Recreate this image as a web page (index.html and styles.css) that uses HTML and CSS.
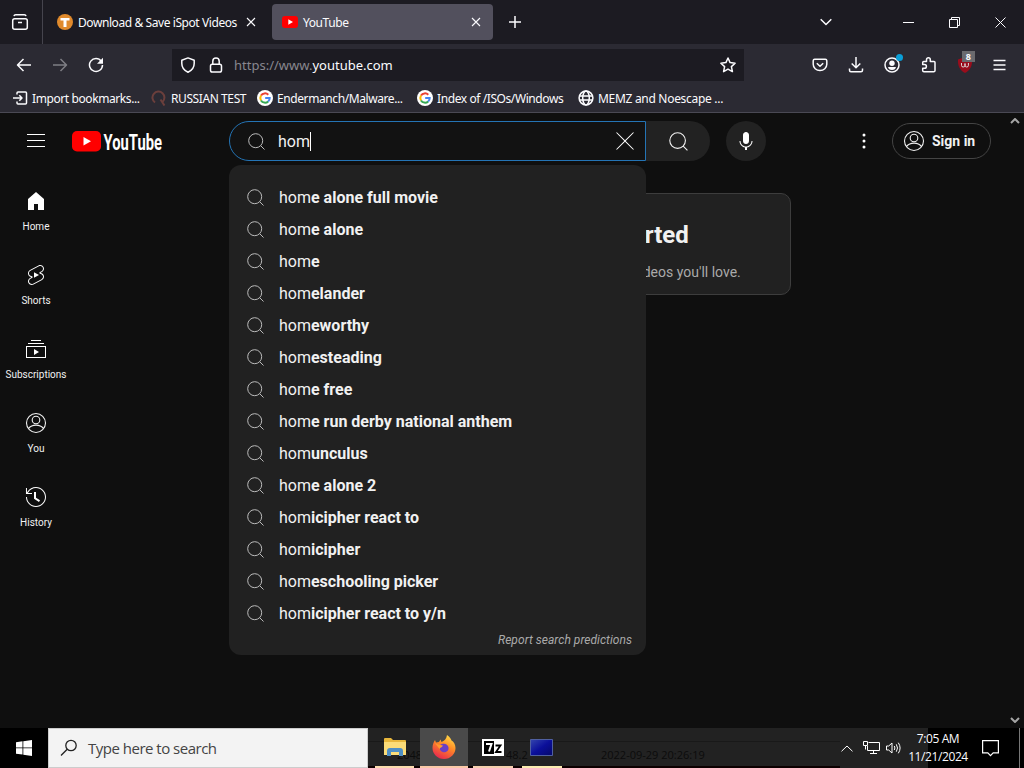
FILE: index.html
```
<!DOCTYPE html>
<html lang="en">
<head>
    <title>YouTube</title>
    <meta charset="utf-8">
    <meta name="viewport" content="width=device-width, initial-scale=1.0">
    <link rel="stylesheet" href="styles.css">
</head>
<body>
<!-- shared icons -->
<svg class="defs" width="0" height="0">
    <defs>
        <symbol id="search" viewBox="0 0 17 17"><g fill="none" stroke="currentColor"><circle cx="7.700" cy="7.700" r="7"/><path d="M12.700 12.700l3.800 3.800"/></g></symbol>
        <symbol id="person" viewBox="0 0 24 24"><g fill="none" stroke="currentColor" stroke-width="1.100"><circle cx="12" cy="12" r="9.500"/><circle cx="12" cy="9" r="3.800"/><path d="M4.400 17.600c2-2.500 4.600-3.500 7.600-3.500s5.600 1 7.600 3.500"/></g></symbol>
        <symbol id="google" viewBox="0 0 16 16">
            <circle cx="8" cy="8" r="8" fill="#fff"/>
            <g fill="none" stroke-width="2">
                <path d="M11.300 4.700A4.700 4.700 0 0 0 4 5.600" stroke="#ea4335"/>
                <path d="M4 5.600a4.700 4.700 0 0 0 0 4.800" stroke="#fbbc05"/>
                <path d="M4 10.400a4.700 4.700 0 0 0 7.200 1" stroke="#34a853"/>
                <path d="M11.200 11.400A4.600 4.600 0 0 0 12.700 8H8.200" stroke="#4285f4"/>
            </g>
        </symbol>
        <symbol id="cross" viewBox="0 0 10 10"><path d="M1 1l8 8M9 1l-8 8" fill="none" stroke="currentColor" stroke-width="1.100"/></symbol>
    </defs>
</svg>

<div class="tabs">
    <div class="view">
        <svg class="line" width="18" height="18" viewBox="0 0 18 18"><rect x="1.700" y="5.700" width="14.600" height="10.600" rx="2"/><path d="M3 3.200Q3.200 1.700 4.700 1.700h8.600Q14.800 1.700 15 3.200M7 9.500h4"/></svg>
    </div>
    <div class="tab">
        <svg width="16" height="16" viewBox="0 0 16 16"><circle cx="8" cy="8" r="8" fill="#e08a2c"/><path d="M3.500 4h9v2.500H9.500V13h-3V6.500h-3z" fill="#fff"/></svg>
        <span class="title">Download &amp; Save iSpot Videos</span>
        <svg class="close" width="10" height="10"><use href="#cross"/></svg>
    </div>
    <div class="tab active">
        <svg width="16" height="12" viewBox="0 0 16 12"><rect width="16" height="12" rx="3" fill="#f00"/><path d="M6.300 3.300v5.400L11 6z" fill="#fff"/></svg>
        <span class="title">YouTube</span>
        <svg class="close" width="10" height="10"><use href="#cross"/></svg>
    </div>
    <svg class="line plus" width="12" height="12" viewBox="0 0 12 12"><path d="M6 0v12M0 6h12"/></svg>
    <div class="window">
        <svg class="line" width="12" height="8" viewBox="0 0 12 8"><path d="M.7 1.200L6 6.500l5.300-5.300"/></svg>
        <svg class="line thin min" width="11" height="11" viewBox="0 0 11 11"><path d="M0 5.500h11"/></svg>
        <svg class="line thin" width="11" height="11" viewBox="0 0 11 11"><path d="M.5 2.500h8v8h-8zM2.500 2.500v-2h8v8h-2"/></svg>
        <svg class="line thin" width="11" height="11" viewBox="0 0 11 11"><path d="M.5.500l10 10M10.500.500l-10 10"/></svg>
    </div>
</div>

<div class="nav">
    <div class="history">
        <svg class="line" width="16" height="16" viewBox="0 0 16 16"><path d="M15 8H1.500M7.500 2L1.500 8l6 6"/></svg>
        <svg class="line off" width="16" height="16" viewBox="0 0 16 16"><path d="M1 8h13.500M8.500 2l6 6-6 6"/></svg>
        <svg class="line" width="16" height="16" viewBox="0 0 16 16"><path d="M13.300 4.200A6.500 6.500 0 1 0 14.500 8"/><path d="M15 .8v6H9z" class="solid"/></svg>
    </div>
    <div class="url">
        <svg class="line" width="16" height="16" viewBox="0 0 16 16"><path d="M8 .9l6.200 2.300v3.300c0 4-2.400 7-6.200 8.700C4.200 13.500 1.800 10.500 1.800 6.500V3.200z"/></svg>
        <svg class="line lock" width="14" height="16" viewBox="0 0 14 16"><rect x="1.500" y="7.200" width="11" height="7.800" rx="1.800"/><path d="M3.800 7V4.200a3.200 3.200 0 0 1 6.400 0V7"/></svg>
        <span class="address"><span>https://www.</span>youtube.com</span>
        <svg class="line star" width="16" height="16" viewBox="0 0 16 16"><path d="M8 1l2.100 4.600 5 .6-3.700 3.400 1 5L8 12.100l-4.400 2.500 1-5L.9 6.200l5-.6z"/></svg>
    </div>
    <div class="tools">
        <svg class="line" width="16" height="16" viewBox="0 0 16 16"><path d="M2.700 2.200h10.600q1.500 0 1.500 1.500v3.600a6.800 6.300 0 0 1-13.600 0V3.700q0-1.500 1.500-1.500zM4.800 6.200L8 9.300l3.200-3.100"/></svg>
        <svg class="line" width="16" height="16" viewBox="0 0 16 16"><path d="M8 0v10.500M3.700 6.500L8 10.700l4.300-4.200M1.500 11.500v1.800q0 1.500 1.500 1.500h10q1.500 0 1.500-1.500v-1.800"/></svg>
        <div class="account">
            <svg class="line" width="16" height="16" viewBox="0 0 16 16"><circle cx="8" cy="8" r="7"/><circle cx="8" cy="6.200" r="2.700" class="solid"/><path d="M4 10h8q-.5 3-4 3T4 10z" class="solid"/></svg>
            <i class="dot"></i>
        </div>
        <svg class="line" width="16" height="16" viewBox="0 0 16 16"><path d="M5.500 4.500V2.700a1.900 1.900 0 0 1 3.800 0v1.800h3.700q1 0 1 1v8q0 1.300-1.300 1.300H3q-1.300 0-1.300-1.300v-2.300h1.900a1.800 1.800 0 0 0 0-3.600H1.700V5.500q0-1 1-1z"/></svg>
        <div class="ublock">
            <svg width="16" height="16" viewBox="0 0 16 16"><path d="M8 0l7 2.500C15.500 9 13 13.500 8 16 3 13.500.5 9 1 2.500z" fill="#990d1c"/><path d="M4.500 6v2.500q0 1.500 1.700 1.500T8 8.500V6.500 8.500Q8 10 9.700 10t1.700-1.500V6" fill="none" stroke="#ddd"/></svg>
            <b class="count">8</b>
        </div>
        <svg class="line" width="13" height="12" viewBox="0 0 13 12"><path d="M.5 1.500h12M.5 6h12M.5 10.500h12"/></svg>
    </div>
</div>

<div class="bookmarks">
    <div class="bookmark b1">
        <svg class="line" width="16" height="16" viewBox="0 0 16 16"><path d="M5 4.500V3q0-1 1-1h7.500q1 0 1 1v10q0 1-1 1H6q-1 0-1-1v-1.500M1 8h9M7.300 5.200L10 8l-2.700 2.800"/></svg>
        <span>Import bookmarks...</span>
    </div>
    <div class="bookmark b2">
        <svg width="16" height="16" viewBox="0 0 16 16"><path d="M4 12.500A6 6 0 1 1 11.500 12M9.500 9.500l4 6" fill="none" stroke="#6b3f3c" stroke-width="2"/></svg>
        <span>RUSSIAN TEST</span>
    </div>
    <div class="bookmark b3">
        <svg width="16" height="16"><use href="#google"/></svg>
        <span>Endermanch/Malware...</span>
    </div>
    <div class="bookmark b4">
        <svg width="16" height="16"><use href="#google"/></svg>
        <span>Index of /ISOs/Windows</span>
    </div>
    <div class="bookmark b5">
        <svg class="line" width="16" height="16" viewBox="0 0 16 16"><circle cx="8" cy="8" r="6.900"/><ellipse cx="8" cy="8" rx="3.300" ry="6.900"/><path d="M1.500 6h13M1.500 10h13"/></svg>
        <span>MEMZ and Noescape ...</span>
    </div>
</div>

<div class="page">
    <div class="masthead">
        <svg width="24" height="24" viewBox="0 0 24 24"><path d="M21 6H3V5h18v1zm0 5H3v1h18v-1zm0 6H3v1h18v-1z"/></svg>
        <svg class="logo" width="92" height="24" viewBox="0 0 92 24">
            <rect y="2" width="29" height="20.500" rx="5" fill="#f00"/>
            <path d="M11.500 8v8.500l7.500-4.250z"/>
            <text x="31.500" y="20.500" textLength="58.500" lengthAdjust="spacingAndGlyphs">YouTube</text>
        </svg>
        <div class="searchbox">
            <svg width="17" height="17"><use href="#search"/></svg>
            <span class="query">hom</span>
            <svg class="clear" width="24" height="24" viewBox="0 0 24 24"><path d="m12.710 12 8.150 8.150-.71.71L12 12.710l-8.150 8.150-.71-.71L11.290 12 3.150 3.850l.71-.71L12 11.290l8.150-8.150.71.71L12.710 12z"/></svg>
            <div class="suggestions">
                <div class="row"><svg width="17" height="17"><use href="#search"/></svg><span>hom<b>e alone full movie</b></span></div>
                <div class="row"><svg width="17" height="17"><use href="#search"/></svg><span>hom<b>e alone</b></span></div>
                <div class="row"><svg width="17" height="17"><use href="#search"/></svg><span>hom<b>e</b></span></div>
                <div class="row"><svg width="17" height="17"><use href="#search"/></svg><span>hom<b>elander</b></span></div>
                <div class="row"><svg width="17" height="17"><use href="#search"/></svg><span>hom<b>eworthy</b></span></div>
                <div class="row"><svg width="17" height="17"><use href="#search"/></svg><span>hom<b>esteading</b></span></div>
                <div class="row"><svg width="17" height="17"><use href="#search"/></svg><span>hom<b>e free</b></span></div>
                <div class="row"><svg width="17" height="17"><use href="#search"/></svg><span>hom<b>e run derby national anthem</b></span></div>
                <div class="row"><svg width="17" height="17"><use href="#search"/></svg><span>hom<b>unculus</b></span></div>
                <div class="row"><svg width="17" height="17"><use href="#search"/></svg><span>hom<b>e alone 2</b></span></div>
                <div class="row"><svg width="17" height="17"><use href="#search"/></svg><span>hom<b>icipher react to</b></span></div>
                <div class="row"><svg width="17" height="17"><use href="#search"/></svg><span>hom<b>icipher</b></span></div>
                <div class="row"><svg width="17" height="17"><use href="#search"/></svg><span>hom<b>eschooling picker</b></span></div>
                <div class="row"><svg width="17" height="17"><use href="#search"/></svg><span>hom<b>icipher react to y/n</b></span></div>
                <div class="report">Report search predictions</div>
            </div>
        </div>
        <div class="go"><svg width="19" height="19"><use href="#search"/></svg></div>
        <div class="mic"><svg width="24" height="24" viewBox="0 0 24 24"><path d="M12 3c-1.660 0-3 1.370-3 3.070v5.860c0 1.700 1.340 3.070 3 3.070s3-1.370 3-3.070V6.070C15 4.370 13.660 3 12 3zm6.500 9h-1c0 3.030-2.470 5.500-5.500 5.500S6.500 15.030 6.500 12h-1c0 3.240 2.390 5.930 5.500 6.410V21h2v-2.590c3.110-.48 5.500-3.170 5.500-6.410z"/></svg></div>
        <svg class="more" width="24" height="24" viewBox="0 0 24 24"><circle cx="12" cy="6" r="1.500"/><circle cx="12" cy="12" r="1.500"/><circle cx="12" cy="18" r="1.500"/></svg>
        <div class="signin"><svg width="24" height="24"><use href="#person"/></svg>Sign in</div>
    </div>
    <div class="content">
        <div class="guide">
            <div class="entry"><svg width="24" height="24" viewBox="0 0 24 24"><path d="M4 21V10.080l8-6.960 8 6.960V21h-6v-6h-4v6H4z"/></svg>Home</div>
            <div class="entry"><svg width="24" height="24" viewBox="0 0 24 24"><path d="M10 14.650v-5.300L15 12l-5 2.650zm7.770-4.330c-.77-.32-1.200-.5-1.200-.5L18 9.060c1.840-.96 2.530-3.230 1.560-5.060s-3.240-2.530-5.070-1.560L6 6.940c-1.290.68-2.070 2.040-2 3.490.07 1.420.93 2.670 2.220 3.250.03.01 1.200.5 1.200.5L6 14.930c-1.830.97-2.530 3.240-1.560 5.070.97 1.830 3.240 2.530 5.070 1.560l8.500-4.500c1.290-.68 2.060-2.040 1.990-3.490-.07-1.420-.94-2.680-2.230-3.250zm-.23 5.860-8.500 4.500c-1.340.71-3.010.2-3.720-1.140-.71-1.340-.2-3.010 1.140-3.720l2.040-1.080v-1.210l-.69-.28-1.110-.46c-.99-.41-1.650-1.350-1.700-2.410-.05-1.060.52-2.060 1.460-2.560l8.500-4.500c1.340-.71 3.010-.2 3.720 1.140.71 1.340.2 3.010-1.140 3.720L15.500 9.260v1.210l1.800.74c.99.41 1.650 1.350 1.700 2.410.05 1.060-.52 2.060-1.460 2.560z"/></svg>Shorts</div>
            <div class="entry"><svg width="24" height="24" viewBox="0 0 24 24"><path d="M10 18v-6l5 3-5 3zm7-15H7v1h10V3zm3 3H4v1h16V6zm2 3H2v12h20V9zM3 10h18v10H3V10z"/></svg>Subscriptions</div>
            <div class="entry"><svg width="24" height="24"><use href="#person"/></svg>You</div>
            <div class="entry"><svg width="24" height="24" viewBox="0 0 24 24"><path d="M14.970 16.950 10 13.870V7h2v5.760l4.030 2.490-1.060 1.700zM22 12c0 5.510-4.490 10-10 10S2 17.510 2 12h1c0 4.960 4.040 9 9 9s9-4.040 9-9-4.040-9-9-9C8.810 3 5.920 4.640 4.280 7.380c-.11.18-.22.37-.31.56L3.940 8H8v1H1.960V3h1v4.740c.04-.09.07-.17.11-.25.11-.22.23-.42.35-.63C5.220 3.860 8.510 2 12 2c5.510 0 10 4.490 10 10z"/></svg>History</div>
        </div>
        <div class="feed">
            <div class="card">
                <h1>Try searching to get started</h1>
                <p>Start watching videos to help us build a feed of videos you'll love.</p>
            </div>
        </div>
    </div>
    <div class="scrollbar">
        <svg width="10" height="6" viewBox="0 0 10 6"><path d="M1 5l4-4 4 4"/></svg>
        <svg width="10" height="6" viewBox="0 0 10 6"><path d="M1 1l4 4 4-4"/></svg>
    </div>
</div>

<div class="taskbar">
    <div class="start">
        <svg width="16" height="16" viewBox="0 0 16 16" fill="#fff"><path d="M0 2.200l6.500-.9v6.200H0zM7.300 1.200L16 0v7.500H7.300zM0 8.300h6.500v6.300L0 13.700zM7.300 8.300H16V16l-8.700-1.200z"/></svg>
    </div>
    <div class="find">
        <svg width="18" height="18" viewBox="0 0 18 18"><circle cx="11" cy="6.500" r="5.200"/><path d="M7.200 10.300L1 16.500"/></svg>
        <span>Type here to search</span>
    </div>
    <div class="apps">
        <span class="ghost g1">2048</span>
        <span class="ghost g2">48.2</span>
        <span class="ghost g3">2022-09-29 20:26:19</span>
        <div class="app a1">
            <svg width="22" height="18" viewBox="0 0 22 18"><path d="M0 1q0-1 1-1h6l2 2h12q1 0 1 1v14H0z" fill="#e8b73c"/><path d="M0 4h22v13H0z" fill="#fbdc78"/><path d="M3 18v-5q0-3 3-3h10q3 0 3 3v5h-4v-4H7v4z" fill="#4f8fc4"/></svg>
        </div>
        <div class="app a2">
            <svg width="24" height="24" viewBox="0 0 24 24">
                <defs><linearGradient id="fox" x1=".8" y1="0" x2=".3" y2="1"><stop offset="0" stop-color="#ffe14a"/><stop offset=".45" stop-color="#ff8a26"/><stop offset="1" stop-color="#e8264f"/></linearGradient></defs>
                <path d="M15 0c3 2 4 4 4.500 5.500 2 1 4 4 4 7.500 0 6-5 11-11.500 11S.5 19 .5 13c0-3 1-6 2.500-8l1 2.500L7 7l1.500-2.500 1 2.500C12 6 14.500 4 15 0z" fill="url(#fox)"/>
                <path d="M8 10c3-2.500 8-1.500 8.500 2.500S13 18 10.500 17 7 13.500 8 10z" fill="#6b3fc6"/>
                <path d="M3 8c2 1 4 2 8 2.500-1 2-3 2-3.500 3.500z" fill="#ff9a2e"/>
            </svg>
        </div>
        <div class="app a3">
            <svg width="22" height="17" viewBox="0 0 22 17"><path d="M0 0h22v17H0z" fill="#fff"/><path d="M2 2h10v13H2z"/><path d="M4 5h5.500L7 12.500" fill="none" stroke="#fff" stroke-width="2"/><path d="M13.500 6.500h5l-4.500 6.500h5.500" fill="none" stroke="#000" stroke-width="1.800"/></svg>
        </div>
        <div class="app a4">
            <svg width="23" height="17" viewBox="0 0 23 17"><defs><linearGradient id="screen" x1="0" y1="0" x2="1" y2="1"><stop offset="0" stop-color="#3446ae"/><stop offset=".5" stop-color="#0b0f9a"/><stop offset="1" stop-color="#050868"/></linearGradient></defs><path d="M.5.500h22v16H.5z" fill="url(#screen)" stroke="#5060a0"/></svg>
        </div>
    </div>
    <div class="tray">
        <svg width="12" height="7" viewBox="0 0 12 7"><path d="M.5 6.300L6 1l5.500 5.300"/></svg>
        <svg class="net" width="17" height="14" viewBox="0 0 17 14"><path d="M5.500 1.500h11v8h-12V5M10.500 9.500v3M7 12.500h7M.5.500h4v4h-4zM2.500 4.500v4"/></svg>
        <svg class="vol" width="15" height="14" viewBox="0 0 15 14"><path d="M.5 5h2.200L6 2v10L2.700 9H.5zM8.300 5q1.200 2 0 4M10.300 3.300q2.400 3.700 0 7.400M12.300 1.700q3.600 5.300 0 10.600"/></svg>
        <div class="clock"><span>7:05 AM</span><span>11/21/2024</span></div>
        <svg class="note" width="17" height="17" viewBox="0 0 17 17"><path d="M.6.600h15.800v12.300h-5.200l-2.700 2.700-2.700-2.700H.6z"/></svg>
        <i class="peek"></i>
    </div>
</div>
</body>
</html>
```
FILE: styles.css
```
:root {
    --fg: #fbfbfe;
    --tabs: #1c1b22;
    --bar: #2b2a33;
    --page: #0f0f0f;
    --raised: #212121;
}

* {
    box-sizing: border-box;
}

html, body {
    margin: 0;
    height: 100%;
    overflow: hidden;
    background: var(--page);
    cursor: default;
}

body {
    display: flex;
    flex-direction: column;
    color: var(--fg);
    font: 12px "Noto Sans", "Open Sans", sans-serif;
    white-space: nowrap;
}

svg {
    display: block;
    flex: none;
}

.defs {
    position: absolute;
}

.line {
    fill: none;
    stroke: var(--fg);
    stroke-width: 1.5;
    stroke-linejoin: round;
}

.line .solid {
    fill: var(--fg);
    stroke: none;
}

.thin {
    stroke-width: 1;
    stroke-linejoin: miter;
}

.off {
    opacity: .4;
}

/* browser tabs */

.tabs {
    display: flex;
    align-items: center;
    height: 44px;
    background: var(--tabs);
}

.view {
    display: flex;
    align-items: center;
    width: 43px;
    height: 44px;
    padding-left: 11px;
    border-right: 1px solid #45444d;
}

.tab {
    display: flex;
    align-items: center;
    width: 221px;
    height: 36px;
    padding: 0 12px 0 10px;
    border-radius: 4px;
}

.tab:not(.active) {
    margin-left: 4px;
    margin-right: 4px;
}

.active {
    background: #52505d;
}

.title {
    flex: 1;
    margin-left: 5px;
    letter-spacing: -.42px;
}

.close {
    color: var(--fg);
}

.plus {
    margin-left: 16px;
}

.window {
    display: flex;
    align-items: center;
    gap: 35px;
    margin-left: auto;
    padding-right: 18px;
}

.window .min {
    margin-left: 36px;
}

/* toolbar */

.nav {
    display: flex;
    align-items: center;
    height: 42px;
    background: var(--bar);
}

.history {
    display: flex;
    gap: 20px;
    width: 172px;
    padding-left: 16px;
}

.url {
    display: flex;
    align-items: center;
    width: 572px;
    height: 32px;
    padding: 0 8px;
    background: var(--tabs);
}

.lock {
    margin-left: 13px;
}

.address {
    margin-left: 11px;
    font-size: 13px;
}

.address span {
    color: #88878f;
}

.star {
    margin-left: auto;
}

.tools {
    display: flex;
    align-items: center;
    justify-content: space-between;
    width: 194px;
    margin-left: 68px;
}

.account, .ublock {
    position: relative;
}

.dot {
    position: absolute;
    top: -3px;
    right: -3px;
    width: 7px;
    height: 7px;
    border-radius: 50%;
    background: #0a9fd8;
}

.count {
    position: absolute;
    top: -6px;
    left: 5px;
    width: 13px;
    height: 11px;
    background: #6a6a6e;
    font: bold 9px/11px "Noto Sans", sans-serif;
    text-align: center;
}

.bookmarks {
    display: flex;
    align-items: center;
    gap: 12px;
    height: 27px;
    padding: 0 12px 2px;
    background: var(--bar);
    border-bottom: 1px solid #4a4954;
    letter-spacing: -.41px;
}

.bookmark {
    display: flex;
    align-items: center;
    gap: 4px;
}

.b1 { width: 127px; }
.b2 { width: 94px; }
.b3 { width: 148px; }
.b4 { width: 149px; }

.b5 {
    letter-spacing: -.3px;
}

/* page */

.page {
    position: relative;
    flex: 1;
    background: var(--page);
    color: #f1f1f1;
    fill: #fff;
    font-family: Roboto, sans-serif;
}

.masthead {
    display: flex;
    align-items: center;
    height: 56px;
    padding-left: 24px;
}

.logo {
    margin-left: 24px;
    overflow: visible;
}

.logo text {
    font: bold 22px Roboto, sans-serif;
}

.searchbox {
    position: relative;
    display: flex;
    align-items: center;
    width: 417px;
    height: 40px;
    margin-left: 65px;
    padding: 0 8px 0 18px;
    background: #121212;
    border: 1px solid #2474b5;
    border-radius: 20px 0 0 20px;
    font-size: 16px;
}

.query {
    margin-left: 13px;
    border-right: 1px solid #fff;
    line-height: 19px;
}

.clear {
    margin-left: auto;
}

.suggestions {
    position: absolute;
    z-index: 1;
    top: 43px;
    left: -1px;
    width: 417px;
    height: 490px;
    padding-top: 16px;
    background: var(--raised);
    border-radius: 12px;
}

.row {
    display: flex;
    align-items: center;
    gap: 15px;
    height: 32px;
    padding-left: 18px;
}

.searchbox use {
    color: #bbb;
}

.report {
    padding: 3px 14px 0 0;
    color: #aaa;
    font: italic 12px/16px Roboto, sans-serif;
    letter-spacing: .04px;
    text-align: right;
}

.go {
    display: flex;
    align-items: center;
    width: 64px;
    height: 40px;
    padding-left: 23px;
    background: #222;
    border-radius: 0 20px 20px 0;
}

.mic {
    display: flex;
    align-items: center;
    justify-content: center;
    width: 40px;
    height: 40px;
    margin-left: 16px;
    background: #222;
    border-radius: 50%;
}

.more {
    margin-left: 86px;
}

.signin {
    display: flex;
    align-items: center;
    gap: 6px;
    width: 99px;
    height: 36px;
    margin-left: 16px;
    padding-left: 9px;
    border: 1px solid #444;
    border-radius: 18px;
    font-size: 14px;
    font-weight: 700;
}

.content {
    display: flex;
    padding-right: 15px;
}

.guide {
    width: 72px;
    padding-top: 4px;
}

.entry {
    display: flex;
    flex-direction: column;
    align-items: center;
    gap: 7px;
    height: 74px;
    padding-top: 16px;
    font-size: 10px;
    line-height: 14px;
}

.feed {
    flex: 1;
    display: flex;
    justify-content: center;
    align-items: flex-start;
    padding-top: 24px;
}

.card {
    width: 501px;
    height: 102px;
    padding: 24px 2px 0 0;
    background: var(--raised);
    border: 1px solid #3d3d3d;
    border-radius: 10px;
    text-align: center;
}

.card h1 {
    margin: 0 0 10px;
    font-size: 24px;
    line-height: 34px;
}

.card p {
    margin: 0;
    color: #aaa;
    font-size: 14px;
    line-height: 20px;
}

.scrollbar {
    position: absolute;
    top: 0;
    right: 4px;
    bottom: 0;
    display: flex;
    flex-direction: column;
    justify-content: space-between;
    padding: 5px 0;
    fill: none;
    stroke: #a5a5a5;
    stroke-width: 2;
}

/* windows taskbar */

.taskbar {
    display: flex;
    height: 40px;
    background: #000;
    font-family: "Open Sans", "Noto Sans", sans-serif;
}

.start {
    display: flex;
    align-items: center;
    justify-content: center;
    width: 48px;
}

.find {
    display: flex;
    align-items: center;
    gap: 10px;
    width: 320px;
    padding-left: 11px;
    background: #f3f3f3;
    border: 1px solid #ccc;
    color: #444;
    font-size: 15px;
    letter-spacing: -.5px;
}

.find svg {
    fill: none;
    stroke: #222;
    stroke-width: 1.3;
}

.apps {
    position: relative;
    display: flex;
    width: 472px;
    padding-left: 7px;
    background: linear-gradient(#222 13px, #191919 13px, #191919 14px, #222 14px, #222 38px, #0c0000 38px);
}

.ghost {
    position: absolute;
    top: 19px;
    color: #0c0c0c;
    font-size: 11px;
}

.g1 { left: 29px; }
.g2 { left: 138px; }
.g3 { left: 233px; }

.app {
    position: relative;
    display: flex;
    align-items: center;
    justify-content: center;
    border-bottom: 2px solid #fbdcae;
}

.a1 { width: 39px; }
.a2 { width: 48px; margin-left: 6px; background: #4a4a4a; border-color: #fbc9a8; }
.a3 { width: 40px; margin-left: 5px; border-color: #f5cfae; }
.a4 { width: 40px; margin-left: 9px; padding-right: 2px; border-color: #fbecb0; }

.tray {
    display: flex;
    align-items: center;
    flex: 1;
    background: linear-gradient(90deg, #222 88px, #000 88px);
}

.tray svg {
    margin-left: 1px;
    fill: none;
    stroke: #fff;
}

.tray .net { margin-left: 10px; }
.tray .vol { margin-left: 6px; }

.clock {
    display: flex;
    flex-direction: column;
    align-items: center;
    width: 62px;
    margin-left: 6px;
    letter-spacing: -.4px;
    line-height: 18px;
}

.tray .note {
    margin-left: 13px;
    stroke-width: 1.2;
}

.peek {
    width: 1px;
    height: 40px;
    margin-left: 20px;
    background: #777;
}
```
